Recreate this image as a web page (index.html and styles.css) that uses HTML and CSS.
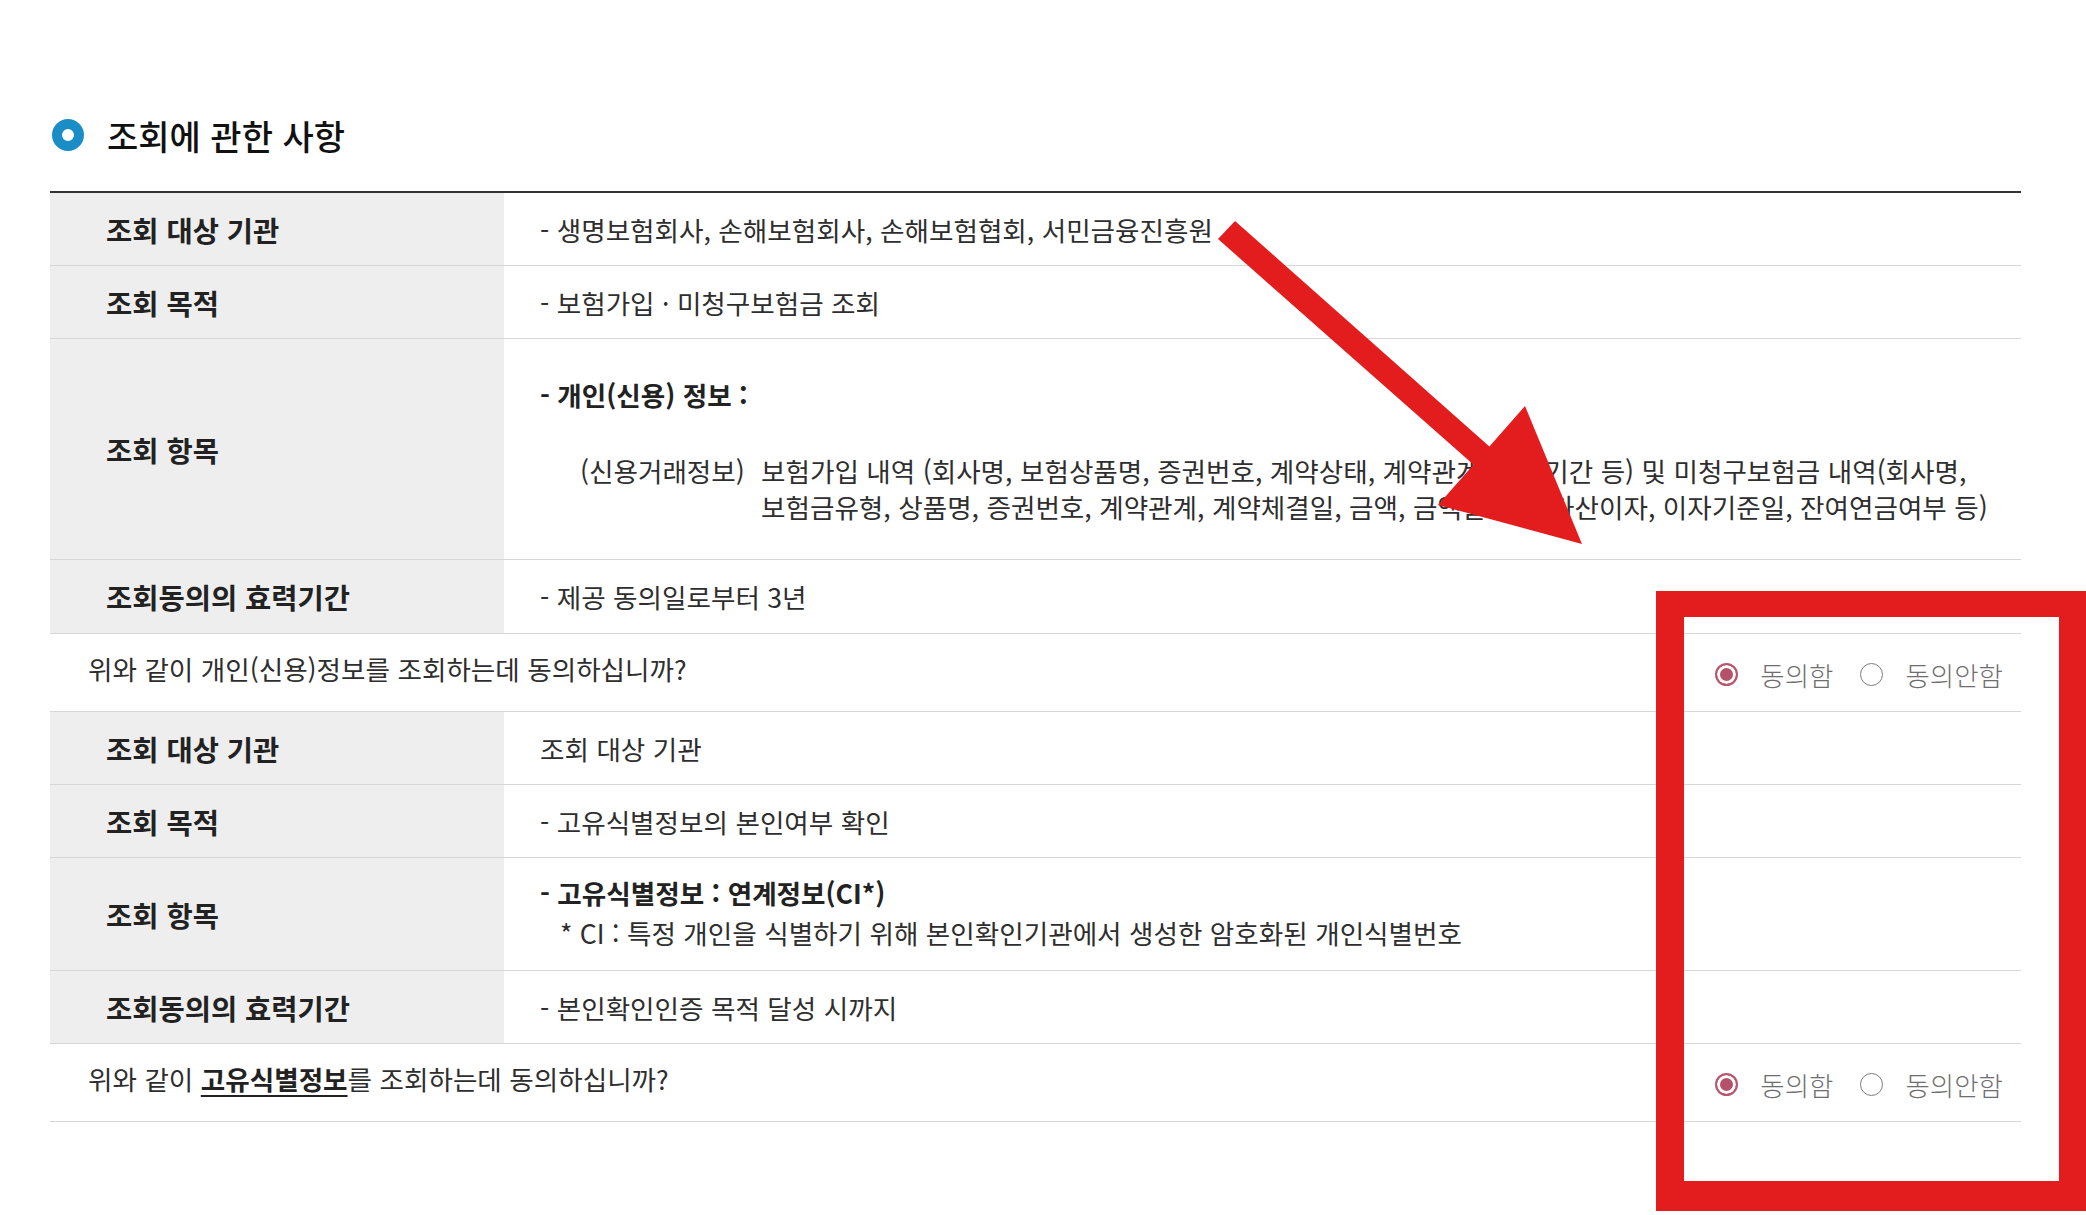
FILE: index.html
```html
<!DOCTYPE html>
<html lang="ko">
<head>
<meta charset="utf-8">
<title>조회에 관한 사항</title>
<link rel="stylesheet" href="styles.css">
</head>
<body>
<div class="wrap">
  <h2 class="title"><span class="title-icon"></span>조회에 관한 사항</h2>
  <div class="info">
    <div class="row">
      <div class="th">조회 대상 기관</div>
      <div class="td">- 생명보험회사, 손해보험회사, 손해보험협회, 서민금융진흥원</div>
    </div>
    <div class="row">
      <div class="th">조회 목적</div>
      <div class="td">- 보험가입 · 미청구보험금 조회</div>
    </div>
    <div class="row row-items">
      <div class="th">조회 항목</div>
      <div class="td td-items">
        <p class="strong">- 개인(신용) 정보 :</p>
        <div class="credit">
          <span class="credit-label">(신용거래정보)</span>
          <p class="credit-text">보험가입 내역 (회사명, 보험상품명, 증권번호, 계약상태, 계약관계, 보험기간 등) 및 미청구보험금 내역(회사명,<br>보험금유형, 상품명, 증권번호, 계약관계, 계약체결일, 금액, 금액발생일, 가산이자, 이자기준일, 잔여연금여부 등)</p>
        </div>
      </div>
    </div>
    <div class="row row-period">
      <div class="th">조회동의의 효력기간</div>
      <div class="td">- 제공 동의일로부터 3년</div>
    </div>
    <div class="row-q">
      <p class="question">위와 같이 개인(신용)정보를 조회하는데 동의하십니까?</p>
      <div class="choices">
        <span class="choice"><span class="radio radio-on"></span>동의함</span>
        <span class="choice"><span class="radio"></span>동의안함</span>
      </div>
    </div>
    <div class="row">
      <div class="th">조회 대상 기관</div>
      <div class="td">조회 대상 기관</div>
    </div>
    <div class="row">
      <div class="th">조회 목적</div>
      <div class="td">- 고유식별정보의 본인여부 확인</div>
    </div>
    <div class="row row-ci">
      <div class="th">조회 항목</div>
      <div class="td td-ci">
        <p class="strong">- 고유식별정보 : 연계정보(CI*)</p>
        <p class="note">* CI : 특정 개인을 식별하기 위해 본인확인기관에서 생성한 암호화된 개인식별번호</p>
      </div>
    </div>
    <div class="row">
      <div class="th">조회동의의 효력기간</div>
      <div class="td">- 본인확인인증 목적 달성 시까지</div>
    </div>
    <div class="row-q">
      <p class="question">위와 같이 <strong class="em">고유식별정보</strong>를 조회하는데 동의하십니까?</p>
      <div class="choices">
        <span class="choice"><span class="radio radio-on"></span>동의함</span>
        <span class="choice"><span class="radio"></span>동의안함</span>
      </div>
    </div>
  </div>
</div>
<svg class="annot" width="2086" height="1215" viewBox="0 0 2086 1215" aria-hidden="true">
  <path fill="#e31c1e" fill-rule="evenodd" d="M1656 591H2086V1211H1656Z M1684 617V1181H2059V617Z"/>
  <polygon fill="#e31c1e" points="1235,221 1508,463 1492,481 1218,239"/>
  <polygon fill="#e31c1e" points="1525,406 1582,544 1438,505"/>
</svg>
</body>
</html>
```
FILE: styles.css
```css
* { box-sizing: border-box; margin: 0; padding: 0; }
html, body { background: #fff; overflow: hidden; }
body {
  font-family: "Noto Sans CJK KR", "Noto Sans", sans-serif;
  color: #333;
  width: 2086px;
  height: 1215px;
  position: relative;
}
.wrap { padding: 115px 65px 0 50px; }
.title {
  display: flex;
  align-items: center;
  gap: 23px;
  height: 40px;
  padding-left: 2px;
  margin-bottom: 36px;
  font-size: 34px;
  font-weight: 500;
  color: #111;
}
.title-icon {
  width: 32px;
  height: 32px;
  border: 10px solid #1b8dc6;
  border-radius: 50%;
  flex: none;
}
.info { border-top: 2px solid #333; }
.row {
  display: grid;
  grid-template-columns: 454px 1fr;
  border-bottom: 1px solid #d6d6d6;
  min-height: 73px;
}
.row-items { min-height: 221px; }
.row-period { min-height: 74px; }
.row-ci { min-height: 113px; }
.th {
  background: #eee;
  display: flex;
  align-items: center;
  padding-left: 56px;
  font-size: 28.5px;
  font-weight: 700;
  color: #222;
}
.td {
  display: flex;
  flex-direction: column;
  justify-content: center;
  padding-left: 36px;
  font-size: 26.6px;
  color: #2e2e2e;
}
.strong { font-weight: 700; color: #222; }
.td-items {
  justify-content: flex-start;
  padding-top: 39px;
  line-height: 34px;
}
.credit {
  display: flex;
  margin-top: 41px;
  padding-left: 40px;
  line-height: 36px;
}
.credit-label { width: 181px; flex: none; }
.credit-text { white-space: nowrap; }
.td-ci { line-height: 40px; padding-bottom: 2px; }
.note { padding-left: 20px; }
.row-q {
  display: flex;
  align-items: center;
  justify-content: space-between;
  min-height: 78px;
  padding: 0 18px 0 38px;
  border-bottom: 1px solid #d6d6d6;
}
.question { font-size: 26.6px; color: #2e2e2e; padding-bottom: 8px; }
.em {
  font-weight: 700;
  color: #222;
  text-decoration: underline;
  text-decoration-thickness: 2px;
  text-underline-offset: 5px;
}
.choices {
  display: flex;
  align-items: center;
  gap: 27px;
  padding-top: 4px;
}
.choice {
  display: flex;
  align-items: center;
  gap: 22px;
  font-size: 26.5px;
  font-weight: 300;
  color: #6e6e6e;
}
.radio {
  width: 23px;
  height: 23px;
  border-radius: 50%;
  border: 1.5px solid #7c7c7c;
  flex: none;
}
.radio-on {
  border: 2px solid #b9566d;
  background: #b5526a;
  box-shadow: inset 0 0 0 3px #fff;
}
.annot { position: absolute; left: 0; top: 0; pointer-events: none; }
```
